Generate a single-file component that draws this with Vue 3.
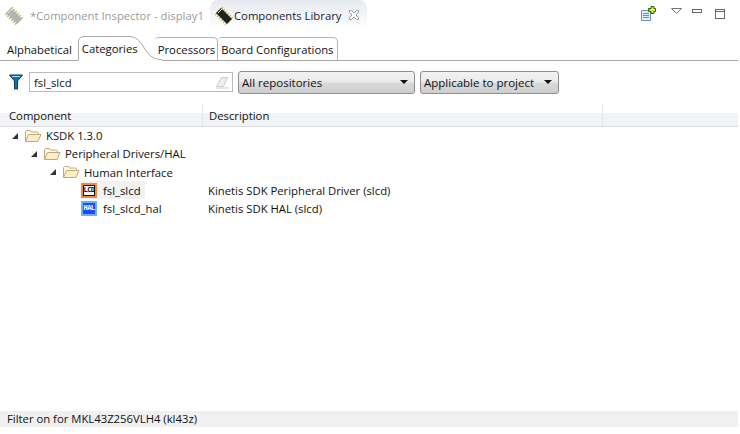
<template>
  <div class="view">
    <div class="title-bar">
      <div class="part-tab inactive">
        <svg class="chip" width="22" height="22" viewBox="0 0 22 22"><use href="#chip-shape" /></svg>
        <span>*Component Inspector - display1</span>
      </div>
      <div class="part-tab current">
        <svg class="chip" width="22" height="22" viewBox="0 0 22 22"><use href="#chip-shape" /></svg>
        <span>Components Library</span>
        <svg class="close" width="12" height="12" viewBox="0 0 12 12">
          <path d="M1.500 1.500h2l2.500 2.500 2.500-2.500h2v2l-2.500 2.500 2.500 2.500v2h-2l-2.500-2.500-2.500 2.500h-2v-2l2.500-2.500-2.500-2.500z" fill="#fff" stroke="#9a9a9a" />
        </svg>
      </div>
      <div class="view-tools">
        <svg width="16" height="16" viewBox="0 0 16 16">
          <path d="M.5 4.500h9v10h-9z" fill="#e4eef8" stroke="#6f93b8" />
          <path d="M2 7.500h6M2 9.500h6M2 11.500h6" stroke="#5b8fc0" />
          <path d="M7.500 2.500h2.500v-2h3v2h1.500v3h-1.500v2h-3v-2h-2.500z" fill="#7fd000" stroke="#2e6b00" />
          <path d="M11.500 1.500v5M9 4h5" stroke="#e6f54a" stroke-width="1.500" />
        </svg>
        <svg class="menu" width="12" height="7" viewBox="0 0 12 7"><path d="M.5.500h10l-5 5z" fill="#fff" stroke="#777" /></svg>
        <svg class="min" width="11" height="5" viewBox="0 0 11 5"><rect x=".5" y=".5" width="9" height="3" fill="#fff" stroke="#666" /></svg>
        <svg class="max" width="11" height="11" viewBox="0 0 11 11"><rect x=".5" y=".5" width="9" height="9" fill="#fff" stroke="#666" /><path d="M0 2.500h10" stroke="#666" /></svg>
      </div>
    </div>

    <div class="sub-tabs">
      <div v-for="tab in tabs" :key="tab" class="sub-tab" :class="tabClass(tab)">
        <svg v-if="tab === 'Categories'" class="tab-curve" width="84" height="25" viewBox="0 0 84 25">
          <path d="M.5 25V6Q.5 .5 6 .5H52C66 .5 66 23.500 82 23.500H84V25z" fill="#fff" />
          <path d="M.5 24V6Q.5 .5 6 .5H52C66 .5 66 23.500 82 23.500H84" fill="none" stroke="#aaa" />
        </svg>
        <span>{{ tab }}</span>
      </div>
    </div>

    <div class="filter-row">
      <svg class="funnel" width="14" height="16" viewBox="0 0 14 16">
        <path d="M.5 1h13L8.500 7v8h-3V7z" fill="#12749c" stroke="#0b3f5c" />
        <path d="M3 2.500h8" stroke="#a9dcec" />
      </svg>
      <div class="search">
        <span>fsl_slcd</span>
        <svg width="15" height="13" viewBox="0 0 15 13">
          <path d="M1.500 10.500l5-9h6l-4 9z" fill="#eee" stroke="#ccc" />
          <path d="M1 12h13" stroke="#ccc" />
        </svg>
      </div>
      <div class="combo wide"><span>All repositories</span><i class="caret"></i></div>
      <div class="combo"><span>Applicable to project</span><i class="caret"></i></div>
    </div>

    <div class="table-head">
      <div class="col first">Component</div>
      <div class="col second">Description</div>
      <div class="col rest"></div>
    </div>

    <div class="tree">
      <div v-for="row in rows" :key="row.name" class="row">
        <div class="name-cell" :style="{ paddingLeft: row.indent + 'px' }">
          <template v-if="row.folder">
            <i class="twisty"></i>
            <svg class="folder" width="17" height="14" viewBox="0 0 17 14">
              <path d="M.5 12.500v-10l1-1h4l1 1.500h6l1 1v1.500" fill="#fff9ea" stroke="#c2a979" />
              <path d="M.5 12.500l3-7h12.500l-3 7z" fill="#fdeec8" stroke="#c2a979" />
            </svg>
            <span class="label">{{ row.name }}</span>
          </template>
          <template v-else>
            <div class="leaf" :class="{ picked: row.picked }">
              <span class="badge" :class="row.kind">{{ row.badge }}</span>
              <span class="label">{{ row.name }}</span>
            </div>
          </template>
        </div>
        <div class="desc-cell">{{ row.desc }}</div>
      </div>
    </div>

    <div class="status">Filter on for MKL43Z256VLH4 (kl43z)</div>

    <svg width="0" height="0" class="defs">
      <defs>
        <g id="chip-shape">
          <path d="M5.500 6.500L16.500 17.500" stroke="#d2c26c" stroke-width="11" stroke-dasharray="1.500 1.300" />
          <path d="M5.500 6.500L16.500 17.500" stroke="currentColor" stroke-width="7" />
          <path d="M5 9L9 5" stroke="#e8e8e8" stroke-width="1" />
        </g>
      </defs>
    </svg>
  </div>
</template>

<script setup>
const tabs = ['Alphabetical', 'Categories', 'Processors', 'Board Configurations']

const rows = [
  { name: 'KSDK 1.3.0', folder: true, indent: 12 },
  { name: 'Peripheral Drivers/HAL', folder: true, indent: 31 },
  { name: 'Human Interface', folder: true, indent: 50 },
  { name: 'fsl_slcd', indent: 80, badge: 'LCD', kind: 'lcd', picked: true, desc: 'Kinetis SDK Peripheral Driver (slcd)' },
  { name: 'fsl_slcd_hal', indent: 80, badge: 'HAL', kind: 'hal', desc: 'Kinetis SDK HAL (slcd)' }
]

const tabClass = (tab) => ({
  active: tab === 'Categories',
  plain: tab === 'Alphabetical',
  next: tab === 'Processors',
  board: tab === 'Board Configurations'
})
</script>

<style>
html, body {
  margin: 0;
  background: #fff;
}
</style>

<style scoped>
.view {
  width: 740px;
  height: 434px;
  overflow: hidden;
  position: relative;
  background: #fff;
  color: #111;
  font-family: "Open Sans", "Noto Sans", sans-serif;
  font-size: 11.300px;
  box-sizing: border-box;
}

.title-bar {
  display: flex;
  height: 30px;
  padding-left: 3px;
  align-items: stretch;
}

.part-tab {
  display: flex;
  align-items: center;
  padding-top: 1px;
  height: 29px;
  box-sizing: border-box;
}

.part-tab.inactive {
  width: 207px;
  color: #9b9b9b;
}

.part-tab.inactive .chip {
  color: #b4b4b4;
  margin-right: 5px;
}

.part-tab.current {
  width: 157px;
  color: #1a1a2e;
  background: linear-gradient(#e6e9ef, #fff);
  border-radius: 8px 8px 0 0;
  padding-left: 3px;
}

.part-tab.current .chip {
  color: #222;
  margin-right: -1px;
}

.close {
  margin-left: 7px;
}

.view-tools {
  margin-left: auto;
  display: flex;
  align-items: flex-start;
  padding-top: 6px;
  padding-right: 14px;
}

.menu {
  margin: 2px 0 0 14px;
}

.min {
  margin: 3px 0 0 9px;
}

.max {
  margin: 3px 0 0 12px;
}

.sub-tabs {
  display: flex;
  height: 31px;
  box-sizing: border-box;
  padding: 7px 0 0 3px;
  border-bottom: 1px solid #a8a8a8;
  margin-right: 2px;
}

.sub-tab {
  height: 23px;
  line-height: 24px;
  padding: 0 3px;
  border: 1px solid #b4b4b4;
  border-bottom: none;
  border-radius: 4px 5px 0 0;
  box-sizing: border-box;
  background: #fff;
  white-space: nowrap;
}

.sub-tab.plain {
  border-color: transparent;
  padding-right: 1px;
  margin-right: 4px;
}

.sub-tab.next {
  border-left: none;
  padding-right: 2px;
}

.sub-tab.board {
  border-left: none;
  padding-left: 3px;
}

.sub-tab.active {
  position: relative;
  z-index: 1;
  height: 25px;
  line-height: 26px;
  padding: 0 17px 0 4px;
  border: none;
  border-radius: 0;
  background: none;
  margin-top: -1px;
  margin-bottom: -1px;
}

.sub-tab.active span {
  position: relative;
}

.tab-curve {
  position: absolute;
  left: 0;
  top: 0;
}

.filter-row {
  display: flex;
  align-items: center;
  height: 22px;
  margin-top: 10px;
  padding-left: 9px;
}

.funnel {
  margin-right: 6px;
}

.search {
  width: 204px;
  height: 20px;
  border: 1px solid #bbb;
  box-sizing: border-box;
  display: flex;
  justify-content: space-between;
  align-items: center;
  padding: 0 2px 0 4px;
  margin-right: 5px;
}

.combo {
  width: 139px;
  height: 23px;
  box-sizing: border-box;
  border: 1px solid #8e8e8e;
  border-radius: 3px;
  background: linear-gradient(#f2f2f2 0%, #ebebeb 45%, #d8d8d8 55%, #cfcfcf 100%);
  display: flex;
  align-items: center;
  justify-content: space-between;
  padding: 0 5px 0 3px;
  font-size: 11.500px;
}

.combo.wide {
  width: 177px;
  margin-right: 5px;
}

.caret {
  width: 0;
  height: 0;
  border: 4px solid transparent;
  border-top: 4px solid #111;
  border-bottom: none;
  margin-right: 1px;
}

.table-head {
  display: flex;
  height: 22px;
  margin-top: 11px;
  margin-right: 2px;
  border-bottom: 1px solid #dcdddf;
  background: linear-gradient(#fff 0, #fff 9px, #f2f3f5 9px);
}

.col {
  box-sizing: border-box;
  line-height: 23px;
  border-right: 1px solid #e6e7e9;
}

.col.first {
  width: 203px;
  padding-left: 9px;
}

.col.second {
  width: 400px;
  padding-left: 6px;
}

.col.rest {
  flex: 1;
  border-right: none;
}

.tree {
  margin-top: -0.6px;
}

.row {
  display: flex;
  height: 18.250px;
  align-items: center;
}

.name-cell {
  width: 208px;
  box-sizing: border-box;
  display: flex;
  align-items: center;
}

.twisty {
  width: 0;
  height: 0;
  border-left: 6px solid transparent;
  border-bottom: 6px solid #333;
  margin-right: 7px;
}

.folder {
  margin-right: 4px;
}

.leaf {
  display: flex;
  align-items: center;
  height: 18px;
}

.leaf.picked {
  background: #f2f2f2;
  border-radius: 3px;
  width: 65px;
}

.badge {
  width: 16px;
  height: 15px;
  box-sizing: border-box;
  margin: 0 6px 0 1px;
  font-family: "DejaVu Sans Mono", monospace;
  font-size: 7px;
  font-weight: 700;
  line-height: 11px;
  text-align: center;
  letter-spacing: -0.5px;
  overflow: hidden;
}

.badge.lcd {
  color: #111;
  background: #fff;
  border: 2px solid #f08a3c;
  box-shadow: inset 0 0 0 1px #111;
}

.badge.hal {
  color: #fff;
  background: #1a4dff;
  border: 2px solid #6cb0f0;
}

.status {
  position: absolute;
  left: 0;
  right: 2px;
  top: 411px;
  height: 16px;
  line-height: 16px;
  background: #f0f0f0;
  padding-left: 7px;
}

.defs {
  position: absolute;
}
</style>
